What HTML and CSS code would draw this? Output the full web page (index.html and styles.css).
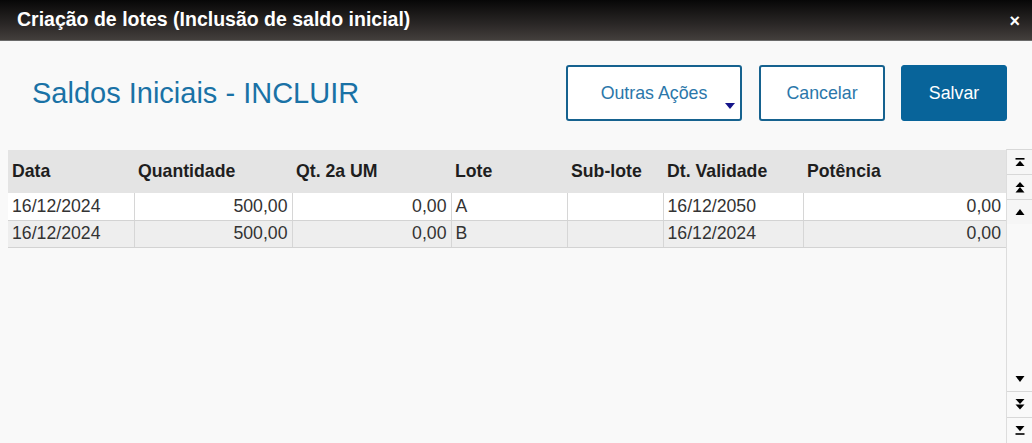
FILE: index.html
```html
<!DOCTYPE html>
<html lang="pt">
<head>
<meta charset="utf-8">
<title>Criação de lotes</title>
<link rel="stylesheet" href="styles.css">
</head>
<body>
<div class="dialog">
  <header class="titlebar">
    <span class="title">Criação de lotes (Inclusão de saldo inicial)</span>
    <span class="close">×</span>
  </header>
  <div class="toolbar">
    <h1 class="heading">Saldos Iniciais - INCLUIR</h1>
    <div class="actions">
      <button class="btn btn-outline btn-menu">Outras Ações<span class="caret"></span></button>
      <button class="btn btn-outline btn-cancel">Cancelar</button>
      <button class="btn btn-primary">Salvar</button>
    </div>
  </div>
  <div class="grid-area">
    <div class="grid-wrap">
      <table class="grid">
        <colgroup>
          <col class="c1"><col class="c2"><col class="c3"><col class="c4"><col class="c5"><col class="c6"><col class="c7">
        </colgroup>
        <thead>
          <tr>
            <th>Data</th><th>Quantidade</th><th>Qt. 2a UM</th><th>Lote</th><th>Sub-lote</th><th>Dt. Validade</th><th>Potência</th>
          </tr>
        </thead>
        <tbody>
          <tr class="odd">
            <td>16/12/2024</td><td class="num">500,00</td><td class="num">0,00</td><td>A</td><td></td><td>16/12/2050</td><td class="num">0,00</td>
          </tr>
          <tr class="even">
            <td>16/12/2024</td><td class="num">500,00</td><td class="num">0,00</td><td>B</td><td></td><td>16/12/2024</td><td class="num">0,00</td>
          </tr>
        </tbody>
      </table>
    </div>
    <div class="scrollbar">
      <div class="sb-group">
        <div class="sb-btn">
          <svg width="10" height="9" viewBox="0 0 10 9"><rect x="0.5" y="0" width="9" height="1.6" fill="#000"/><polygon points="5,2.8 9.5,8 0.5,8" fill="#000"/></svg>
        </div>
        <div class="sb-btn">
          <svg width="10" height="11" viewBox="0 0 10 11"><polygon points="5,0 9.5,5 0.5,5" fill="#000"/><polygon points="5,5 9.5,10.5 0.5,10.5" fill="#000"/></svg>
        </div>
        <div class="sb-btn last">
          <svg width="10" height="6" viewBox="0 0 10 6"><polygon points="5,0 9.5,6 0.5,6" fill="#000"/></svg>
        </div>
      </div>
      <div class="sb-track"></div>
      <div class="sb-group bottom">
        <div class="sb-btn">
          <svg width="10" height="6" viewBox="0 0 10 6"><polygon points="0.5,0 9.5,0 5,6" fill="#000"/></svg>
        </div>
        <div class="sb-btn">
          <svg width="10" height="11" viewBox="0 0 10 11"><polygon points="0.5,0 9.5,0 5,5" fill="#000"/><polygon points="0.5,5.5 9.5,5.5 5,10.5" fill="#000"/></svg>
        </div>
        <div class="sb-btn last">
          <svg width="10" height="9" viewBox="0 0 10 9"><polygon points="0.5,0 9.5,0 5,5.2" fill="#000"/><rect x="0.5" y="7.2" width="9" height="1.6" fill="#000"/></svg>
        </div>
      </div>
    </div>
  </div>
</div>
</body>
</html>
```

FILE: styles.css
```css
html, body {
  margin: 0;
  padding: 0;
  height: 100%;
}
body {
  background: #f9f9f9;
  font-family: "Liberation Sans", Arial, sans-serif;
  color: #333;
  overflow: hidden;
}
.dialog {
  display: flex;
  flex-direction: column;
  height: 443px;
}
.titlebar {
  height: 41px;
  flex: none;
  display: flex;
  align-items: center;
  justify-content: space-between;
  padding: 0 12px 0 17px;
  background: linear-gradient(#070707, #2a2726 60%, #433f3c);
  border-bottom: 1px solid #6a6a6a;
  box-sizing: border-box;
  color: #fff;
}
.title {
  font-weight: bold;
  font-size: 19.5px;
  margin-top: -1px;
}
.close {
  font-weight: bold;
  font-size: 18px;
  line-height: 1;
  margin-top: 1px;
}
.toolbar {
  display: flex;
  align-items: center;
  justify-content: space-between;
  padding: 24px 25px 0 32px;
  flex: none;
}
.heading {
  margin: 0;
  font-weight: normal;
  font-size: 29px;
  color: #1a72a6;
}
.actions {
  display: flex;
  gap: 17px;
}
.btn {
  height: 56px;
  box-sizing: border-box;
  font-family: "Liberation Sans", Arial, sans-serif;
  font-size: 17.8px;
  border-radius: 3px;
  padding: 0;
  cursor: pointer;
}
.btn-outline {
  background: #fff;
  border: 2px solid #16628f;
  color: #2b77aa;
}
.btn-menu {
  width: 176px;
  position: relative;
}
.btn-cancel {
  width: 126px;
}
.btn-primary {
  width: 106px;
  background: #08649a;
  border: 1px solid #08649a;
  color: #fff;
  margin-left: -1px;
}
.caret {
  position: absolute;
  right: 5px;
  bottom: 10px;
  width: 0;
  height: 0;
  border-left: 5px solid transparent;
  border-right: 5px solid transparent;
  border-top: 6px solid #15158a;
}
.grid-area {
  flex: 1;
  display: flex;
  margin-top: 28px;
  min-height: 0;
}
.grid-wrap {
  flex: 1;
  padding-left: 8px;
  padding-top: 1px;
}
.grid {
  width: 998px;
  border-collapse: collapse;
  table-layout: fixed;
  font-size: 17.7px;
}
.c1 { width: 126px; }
.c2 { width: 158px; }
.c3 { width: 159px; }
.c4 { width: 116px; }
.c5 { width: 96px; }
.c6 { width: 140px; }
.c7 { width: 203px; }
.grid th {
  background: #e4e4e4;
  height: 43px;
  text-align: left;
  font-weight: bold;
  color: #1e1e1e;
  padding: 0 4px;
  box-sizing: border-box;
}
.grid td {
  height: 27px;
  padding: 0 4px;
  box-sizing: border-box;
  border-right: 1px solid #d6d6d6;
  border-bottom: 1px solid #d3d3d3;
  white-space: nowrap;
  color: #333;
}
.grid td:last-child {
  border-right: none;
  padding-right: 5px;
}
.grid .num {
  text-align: right;
}
.grid tr.odd td {
  background: #ffffff;
}
.grid tr.even td {
  background: #eeeeee;
}
.scrollbar {
  width: 25px;
  flex: none;
  display: flex;
  flex-direction: column;
  border-left: 1px solid #dddddd;
  background: #f9f9f9;
}
.sb-group {
  display: flex;
  flex-direction: column;
}
.sb-btn {
  height: 24px;
  display: flex;
  align-items: center;
  justify-content: center;
  border-top: 1px solid #d8d8d8;
  background: #f6f6f6;
}
.sb-group .sb-btn.last {
  border-bottom: none;
}
.sb-track {
  flex: 1;
}
.sb-group.bottom .sb-btn {
  height: 25px;
  background: #f9f9f9;
}
.sb-group.bottom .sb-btn:first-child {
  border-top: none;
}
```
